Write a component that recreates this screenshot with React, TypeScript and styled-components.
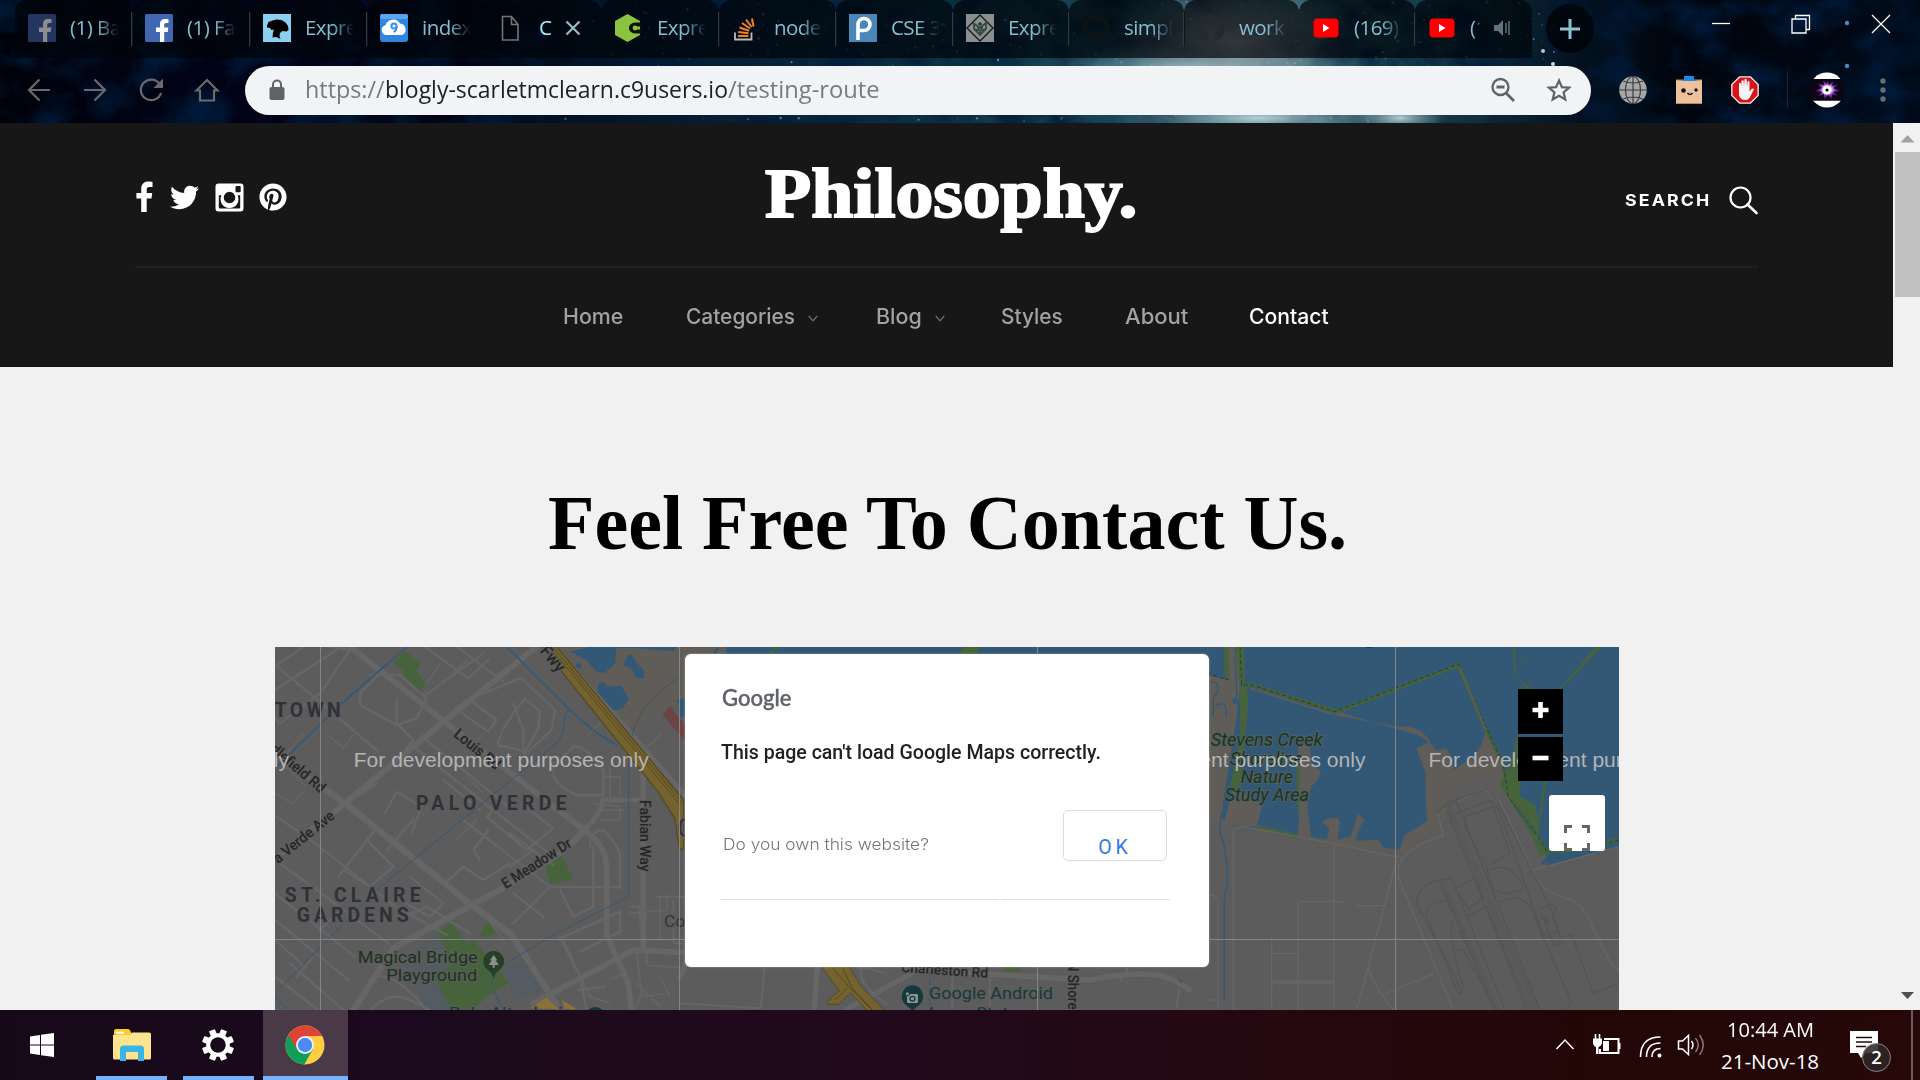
import React, { useLayoutEffect, useRef, useState } from "react";
import styled, { createGlobalStyle, css } from "styled-components";
import { FaTwitter, FaPinterest, FaGithub } from "react-icons/fa";

const GlobalStyle = createGlobalStyle`
  *, *::before, *::after { box-sizing: border-box; }
  html, body { margin: 0; padding: 0; background: #000; overflow: hidden; }
`;

const ui = `"Open Sans", "Noto Sans", sans-serif`;
const serif = `"Liberation Serif", "Times New Roman", serif`;

/* ---------- Text fitted to a known width ---------- */

const FitBox = styled.span<{ $w: number }>`
  display: block;
  flex: none;
  width: ${(p) => p.$w}px;
  white-space: pre;
`;
const FitInner = styled.span`
  display: inline-block;
  transform-origin: 0 50%;
`;

function Fit({ w, children }: { w: number; children: React.ReactNode }) {
  const ref = useRef<HTMLSpanElement>(null);
  const [scale, setScale] = useState(1);
  useLayoutEffect(() => {
    if (ref.current) setScale(w / ref.current.offsetWidth);
  }, [w]);
  return (
    <FitBox $w={w}>
      <FitInner ref={ref} style={{ transform: `scaleX(${scale})` }}>
        {children}
      </FitInner>
    </FitBox>
  );
}

/* ---------- Frame ---------- */

const Screen = styled.div`
  width: 1920px;
  height: 1080px;
  display: flex;
  flex-direction: column;
  overflow: hidden;
  font-family: ${ui};
`;

const Chrome = styled.header`
  position: relative;
  height: 123px;
  flex: none;
  display: flex;
  flex-direction: column;
  background: #01030c;
  overflow: hidden;
`;
const SkyLayer = styled.svg`
  position: absolute;
  inset: 0;
  width: 1920px;
  height: 123px;
`;

function Sky() {
  const stars: React.ReactNode[] = [];
  let seed = 7;
  const rnd = () => (seed = (seed * 16807) % 2147483647) / 2147483647;
  for (let i = 0; i < 420; i++) {
    const x = 560 + rnd() * 1000;
    const y = rnd() * 123;
    stars.push(<circle key={i} cx={x} cy={y} r={0.4 + rnd() * 0.9} fill="#9fc6d6" opacity={0.15 + rnd() * 0.45} />);
  }
  return (
    <SkyLayer viewBox="0 0 1920 123" preserveAspectRatio="none">
      <defs>
        <linearGradient id="sky" x1="0" x2="1">
          <stop offset="0" stopColor="#00020a" />
          <stop offset=".14" stopColor="#01041a" />
          <stop offset=".24" stopColor="#000210" />
          <stop offset=".33" stopColor="#04182e" />
          <stop offset=".45" stopColor="#0a2c40" />
          <stop offset=".58" stopColor="#174456" />
          <stop offset=".66" stopColor="#2f6474" />
          <stop offset=".75" stopColor="#15394a" />
          <stop offset=".82" stopColor="#031220" />
          <stop offset=".88" stopColor="#00040c" />
          <stop offset="1" stopColor="#010a18" />
        </linearGradient>
        <radialGradient id="glow">
          <stop offset="0" stopColor="#cfe6ea" stopOpacity=".85" />
          <stop offset=".5" stopColor="#8fb2ba" stopOpacity=".45" />
          <stop offset="1" stopColor="#6d98a2" stopOpacity="0" />
        </radialGradient>
        <radialGradient id="dust">
          <stop offset="0" stopColor="#c9c4c0" stopOpacity=".8" />
          <stop offset=".6" stopColor="#9a9c9c" stopOpacity=".4" />
          <stop offset="1" stopColor="#7c8c90" stopOpacity="0" />
        </radialGradient>
        <filter id="clouds" x="0" y="0" width="100%" height="100%">
          <feTurbulence type="fractalNoise" baseFrequency=".022 .03" numOctaves="5" seed="4" />
          <feColorMatrix values="0 0 0 0 0  0 0 0 0 0.01  0 0 0 0 0.04  2.4 0 0 0 -0.95" />
        </filter>
      </defs>
      <rect width="1920" height="123" fill="url(#sky)" />
      <rect width="1920" height="123" filter="url(#clouds)" />
      <ellipse cx="1235" cy="42" rx="130" ry="62" fill="url(#dust)" />
      <ellipse cx="1190" cy="75" rx="170" ry="34" fill="url(#glow)" />
      <ellipse cx="1260" cy="118" rx="150" ry="22" fill="url(#glow)" />
      <ellipse cx="1400" cy="118" rx="50" ry="16" fill="url(#glow)" />
      {stars}
      <circle cx="1847" cy="23" r="2.2" fill="#4f8bbd" />
      <circle cx="1847" cy="66" r="2.2" fill="#4f8bbd" />
      <circle cx="1543" cy="51" r="2" fill="#9fd0e0" />
      <circle cx="1553" cy="64" r="2" fill="#b7dfea" />
    </SkyLayer>
  );
}

/* ---------- Tabs ---------- */

const TabStrip = styled.div`
  position: relative;
  height: 58px;
  flex: none;
  display: flex;
  padding-left: 15px;
`;
const Tab = styled.div<{ $w: number; $line?: boolean; $pad?: number }>`
  position: relative;
  width: ${(p) => p.$w}px;
  height: 58px;
  flex: none;
  display: flex;
  align-items: center;
  padding: 0 8px 2px ${(p) => p.$pad ?? 13}px;
  border-radius: 12px 12px 0 0;
  background: rgba(0, 4, 8, 0.7);
  ${(p) =>
    p.$line &&
    css`
      &::after {
        content: "";
        position: absolute;
        right: -1px;
        top: 12px;
        width: 2px;
        height: 34px;
        background: #2b3e45;
      }
    `}
`;
const Favicon = styled.svg`
  width: 28px;
  height: 28px;
  flex: none;
`;
const FaviconSlot = styled.span`
  display: flex;
  width: 28px;
  height: 28px;
  flex: none;
`;
const TabTitle = styled.span<{ $active?: boolean; $gap?: number; $w?: number; $solid?: boolean }>`
  width: ${(p) => p.$w ?? 49}px;
  margin: -2px 0 0 ${(p) => p.$gap ?? 14}px;
  overflow: hidden;
  white-space: nowrap;
  font-size: 20.5px;
  line-height: 28px;
  letter-spacing: -0.55px;
  color: ${(p) => (p.$active ? "#a5e8ff" : "#87bdd0")};
  ${(p) => !p.$solid && css`mask-image: linear-gradient(90deg, #000 55%, transparent 100%);`}
`;
const TabIcon = styled.svg<{ $gap?: number }>`
  flex: none;
  margin-left: ${(p) => p.$gap ?? 8}px;
`;
const NewTab = styled.div`
  width: 48px;
  height: 49px;
  margin: 4px 0 0 14px;
  border-radius: 50%;
  background: rgba(0, 2, 6, 0.8);
  display: flex;
  align-items: center;
  justify-content: center;
`;
const WindowControls = styled.div`
  margin-left: auto;
  padding: 14px 29px 0 0;
  display: flex;
  gap: 60px;
`;

const Fb = ({ dim }: { dim?: boolean }) => (
  <Favicon viewBox="0 0 28 28">
    <rect width="28" height="28" rx="1.5" fill={dim ? "#243560" : "#4267b2"} />
    <path d="M15 28V18h-4v-4.500h4v-3.300C15 6.500 17 5 20.300 5c1.600 0 2.700.100 3.200.200v3.900h-2.200c-1.700 0-2.100.900-2.100 2.100v2.300h4.100l-.600 4.500h-3.500V28z" fill={dim ? "#8d8d8d" : "#fff"} />
  </Favicon>
);
const Heroku = () => (
  <Favicon viewBox="0 0 28 28">
    <rect width="28" height="28" fill="#8bd0f0" />
    <path d="M4 11.500L5.500 8l4-1.500 4-1 5 .5 4 2.500L25 12l.5 4-2 1.500-4-.5-2.500 2-.5 3 1 3-3-1.500-2-.5-3 .5.5-5 1-3-2.500.5-1.500-2-3-.5z" fill="#000" />
  </Favicon>
);
const Cloud9 = () => (
  <Favicon viewBox="0 0 28 28">
    <rect width="28" height="28" rx="3" fill="#2f85e0" />
    <rect width="28" height="5" rx="2" fill="#5aa6f0" />
    <path d="M6 21a5 5 0 0 1-.5-9.800A8 8 0 0 1 20 9.500a6 6 0 0 1 2 11.500z" fill="#fff" />
    <circle cx="14" cy="12" r="2.600" fill="none" stroke="#3b8fe6" strokeWidth="2" />
    <path d="M16.700 12c0 3-1 5-3 6" stroke="#3b8fe6" strokeWidth="2" fill="none" />
  </Favicon>
);
const Doc = () => (
  <Favicon viewBox="0 0 28 28">
    <path d="M1.500 2.500h9l6.500 8v15.500h-15.500zM10.500 2.500v8H17" fill="none" stroke="#747474" strokeWidth="1.600" />
  </Favicon>
);
const Hex = () => (
  <Favicon viewBox="0 0 28 28">
    <path d="M12.500 0L25 7v14l-12.500 7L0 21V7z" fill="#8ac43f" />
    <path d="M26 8.500h-4c-5 0-8 2-8 5.500s3 5.500 8 5.500h4v-4h-4c-2 0-3-.4-3-1.500s1-1.500 3-1.500h4z" fill="#0a1208" />
    <circle cx="20" cy="14" r="2.400" fill="#8ac43f" />
  </Favicon>
);
const StackO = () => (
  <Favicon viewBox="0 0 28 28">
    <path d="M3 18.500v7h16.500v-7" fill="none" stroke="#bcbbbb" strokeWidth="1.800" />
    <path d="M6 22h10.500M6.200 18l10.300 1.200M7.500 13.500l9.500 3.200M10 9l8 5.500M14 5.500l5.500 7.500M20 4.500l1.500 8" stroke="#f48024" strokeWidth="2" />
  </Favicon>
);
const Piazza = () => (
  <Favicon viewBox="0 0 28 28">
    <rect width="28" height="28" fill="#4a86b8" />
    <path d="M9 26V10.500a6 6 0 1 1 6 6H9" fill="none" stroke="#fff" strokeWidth="3.600" />
  </Favicon>
);
const Diamond = () => (
  <Favicon viewBox="0 0 28 28">
    <rect width="28" height="28" fill="#8b8e8e" />
    <path d="M14 1L27 14 14 27 1 14z" fill="#8b9390" stroke="#151a1a" strokeWidth="1.400" />
    <path d="M7 9l7 5 7-6M8 15l6 6 6-6M8 9v6l6 2 6-2V9M11 11l3 8 3-8" fill="none" stroke="#31493c" strokeWidth="1.700" />
    <circle cx="14" cy="10" r="1.800" fill="#26382f" />
  </Favicon>
);
const YouTube = () => (
  <Favicon viewBox="0 0 28 28">
    <rect x="1.500" y="4.500" width="25" height="19" rx="4" fill="#fe0000" />
    <path d="M11 10v8l6.500-4z" fill="#fff" />
  </Favicon>
);
const GitHubMark = ({ color }: { color: string }) => (
  <FaviconSlot>
    <FaGithub size={28} color={color} />
  </FaviconSlot>
);

/* ---------- Toolbar ---------- */

const Toolbar = styled.div`
  position: relative;
  height: 65px;
  display: flex;
  align-items: center;
  padding: 0 0 1px 25px;
`;
const NavIcons = styled.div`
  display: flex;
  gap: 28px;
  width: 220px;
`;
const Omnibox = styled.div`
  width: 1346px;
  height: 49px;
  border-radius: 25px;
  background: #f1f3f4;
  display: flex;
  align-items: center;
  padding: 0 18px 0 20px;
`;
const Url = styled.div`
  display: flex;
  margin-left: 16px;
  flex: 1;
  font-size: 24.5px;
  line-height: 46px;
  height: 49px;
  color: #202124;
`;
const UrlPart = styled.span<{ $muted?: boolean }>`
  color: ${(p) => (p.$muted ? "#777b80" : "#202124")};
`;
const BoxIcons = styled.div`
  display: flex;
  gap: 28px;
`;
const Extensions = styled.div`
  display: flex;
  align-items: center;
  gap: 28px;
  margin-left: 28px;
`;
const Rule = styled.div`
  width: 1px;
  height: 36px;
  background: #20262d;
`;
const AvatarWrap = styled.div`
  margin-left: -7px;
  height: 36px;
`;
const MenuDots = styled.svg`
  margin-left: 6px;
`;

/* ---------- Web page ---------- */

const Viewport = styled.div`
  display: flex;
  height: 887px;
  flex: none;
`;
const Page = styled.main`
  width: 1893px;
  background: #f1f1f1;
  overflow: hidden;
`;
const SiteHeader = styled.div`
  height: 244px;
  background: #171717;
  padding: 0 135px;
`;
const HeaderTop = styled.div`
  height: 145px;
  display: grid;
  grid-template-columns: 1fr auto 1fr;
  border-bottom: 2px solid #202020;
`;
const Social = styled.div`
  display: flex;
  align-items: flex-start;
  padding: 58px 0 0 1px;
  color: #fff;
`;
const SocialItem = styled.span<{ $w: number; $gap: number; $top?: number }>`
  display: flex;
  width: ${(p) => p.$w}px;
  margin-right: ${(p) => p.$gap}px;
  padding-top: ${(p) => p.$top ?? 0}px;
`;
const Logo = styled.div`
  padding: 31px 0 0 8px;
  font: bold 69px/80px ${serif};
  color: #fff;
  -webkit-text-stroke: 2px #fff;
`;
const Search = styled.div`
  display: flex;
  justify-content: flex-end;
  padding-top: 62px;
  font: 700 16.5px/30px Inter, sans-serif;
  letter-spacing: 2px;
  color: #fff;
`;
const SearchIcon = styled.svg`
  margin: 0 0 0 17px;
`;
const Nav = styled.nav`
  display: flex;
  padding: 33px 0 0 428px;
`;
const NavItem = styled.a<{ $active?: boolean; $gap?: number }>`
  display: flex;
  align-items: center;
  margin-right: ${(p) => p.$gap ?? 63}px;
  font: 500 21px/32px Inter, sans-serif;
  color: ${(p) => (p.$active ? "#fff" : "#a2a2a2")};
`;
const Caret = styled.svg`
  margin: 3px 0 0 13px;
`;
const Title = styled.h1`
  margin: 0;
  padding: 116px 0 0 548px;
  height: 280px;
  font: bold 79px/80px ${serif};
  color: #000;
`;
const MapFrame = styled.section`
  position: relative;
  width: 1344px;
  height: 363px;
  margin-left: 275px;
  overflow: hidden;
  background: #5c5c5c;
`;
const MapArt = styled.svg`
  display: block;
`;
const ZoomControls = styled.div`
  position: absolute;
  left: 1243px;
  top: 42px;
  display: flex;
  flex-direction: column;
  gap: 3px;
`;
const ZoomButton = styled.button<{ $h: number }>`
  width: 45px;
  height: ${(p) => p.$h}px;
  padding: 0 0 3px;
  border: 0;
  background: #000;
  display: flex;
  align-items: center;
  justify-content: center;
`;
const Fullscreen = styled.button`
  position: absolute;
  left: 1274px;
  top: 148px;
  width: 56px;
  height: 56px;
  padding: 29px 15px 0;
  border: 0;
  border-radius: 3px;
  background: #fff;
`;
const Dialog = styled.div`
  position: absolute;
  left: 410px;
  top: 7px;
  width: 524px;
  height: 313px;
  padding: 28px 38px 0 36px;
  border-radius: 6px;
  background: #fff;
  box-shadow: 0 0 2px rgba(255, 255, 255, 0.5);
`;
const Brand = styled.div`
  font: 500 23px/30px Lato, sans-serif;
  color: #5f6368;
  padding-left: 1px;
  -webkit-text-stroke: 0.4px #5f6368;
`;
const Message = styled.div`
  margin-top: 26px;
  font: 500 19.500px/30px Roboto, sans-serif;
  color: #202124;
`;
const Actions = styled.div`
  display: flex;
  justify-content: space-between;
  margin: 42px 4px 38px 2px;
`;
const Question = styled.div`
  padding-top: 20px;
  font: 300 16.500px/28px Inter, sans-serif;
  color: #757575;
`;
const OkButton = styled.button`
  width: 104px;
  height: 51px;
  padding: 24px 0 0 0;
  border: 1px solid #dadce0;
  border-radius: 5px;
  background: #fff;
  font: 400 19.500px/26px Roboto, sans-serif;
  letter-spacing: 4px;
  color: #3577e8;
`;
const Lines = styled.div`
  display: grid;
  grid-template-columns: 278px 169px;
  gap: 2px;
`;
const Line = styled.div`
  height: 1px;
  background: #dedede;
`;

/* ---------- Scrollbar ---------- */

const Scrollbar = styled.div`
  width: 27px;
  background: #f1f1f1;
  display: flex;
  flex-direction: column;
  padding-left: 2px;
`;
const ScrollArrow = styled.svg`
  display: block;
  flex: none;
`;
const ScrollThumb = styled.div`
  height: 145px;
  background: #c1c1c1;
  margin-bottom: auto;
`;

/* ---------- Taskbar ---------- */

const Taskbar = styled.footer`
  height: 70px;
  flex: none;
  display: flex;
  background: linear-gradient(90deg, #17081a 0, #1b0a1d 22%, #200a1c 45%, #25080f 68%, #230707 82%, #250807 100%);
`;
const StartButton = styled.div`
  width: 84px;
  padding: 23px 0 0 30px;
`;
const TaskItem = styled.div<{ $w: number; $gap: number; $nudge?: number; $active?: boolean }>`
  width: ${(p) => p.$w}px;
  margin-left: ${(p) => p.$gap}px;
  display: flex;
  justify-content: center;
  align-items: center;
  padding: 3px ${(p) => p.$nudge ?? 0}px 0 0;
  border-bottom: 4px solid #76b2fb;
  background: ${(p) => (p.$active ? "#4a3946" : "transparent")};
`;
const Tray = styled.div`
  margin-left: auto;
  display: flex;
`;
const TrayIcons = styled.svg`
  display: block;
`;
const Clock = styled.div`
  width: 98px;
  margin-left: 10px;
  padding-top: 3px;
  font: 400 20.5px/32px ${ui};
  color: #fff;
  display: flex;
  flex-direction: column;
  align-items: center;
`;
const Notice = styled.div`
  position: relative;
  width: 61px;
  margin-left: 31px;
  padding-top: 20px;
`;
const Badge = styled.span`
  position: absolute;
  left: 12px;
  top: 33px;
  width: 29px;
  height: 29px;
  border-radius: 50%;
  border: 1.5px solid #8b8383;
  background: rgba(44, 38, 38, 0.88);
  font: 600 18.500px/25px ${ui};
  color: #fff;
  text-align: center;
`;
const Peek = styled.div`
  width: 9px;
  border-left: 2px solid #6b5a5a;
`;

/* ---------- Map drawing ---------- */

const road = "#666666";
const water = "#325876";
const park = "#47633c";
const sand = "#605d58";

function WestMap() {
  return (
    <g transform="translate(-5 -7) scale(.33333)" fill="none">
      <path d="M855 20h410v170l-80 10-100 90z" fill={sand} />
      <path d="M495 880l-90 90 60 140h130l-60-180zM700 985l80-30 50 95-100 30z" fill="#545c61" />
      <g fill={park}>
        <path d="M405 32l48 38-14 20 28 40-16 27-57-42 8-18-34-30z" />
        <path d="M825 680l48-34 35 65-8 10-58 10z" />
        <path d="M502 875l43-25 45 60 18-14 108 132-78 52-30 35h-60l-60-110 60-30z" />
        <path d="M630 885q15-35 28-35 12 10 24 27-30 25-52 8z" />
      </g>
      <path d="M1178 225l22-28 50 65v48z" fill="#6d4444" />
      <g fill={water}>
        <path d="M900 35l60-15h80l-5 50-30 28-25-2-30-35zM1020 20h200l-10 14-50-4-60-5zM1060 75l14-30 12 0 20 30 18 20-5 22-22-5-15-27zM985 130l14-4 16 14 40-2 22 38-20 30-35 8-25-22-14-22zM918 72l10-6 8 12-8 8-10-6zM1218 180l32-6v30l-22-8z" />
      </g>
      <g stroke={road} strokeLinejoin="round" strokeLinecap="round">
        <g strokeWidth="19">
          <path d="M240 20L530 250 950 575q60 45 60 110v200l65 145 10 80" strokeWidth="17" />
          <path d="M800 20L520 245 225 490 10 660" strokeWidth="18" />
          <path d="M10 340L225 490 605 795 725 885 870 1110" />
          <path d="M940 570Q900 640 605 795L370 925 250 1110" />
          <path d="M790 1090L1090 930l160 8M1120 380v550" strokeWidth="17" />
          <path d="M995 480h130M1000 480q-10 50-60 90" strokeWidth="14" />
          <path d="M850 20l400 450" strokeWidth="15" />
        </g>
        <g strokeWidth="7">
          <path d="M15 150l200-130M15 75l110 90 200 170M180 20l60 10-90 130-120 90-15-15" />
          <path d="M20 530l110 75 240 190 160 90M15 660l180 130 160 120M15 760l240 190M15 840l160 130 60 50M15 900l90 80" />
          <path d="M100 20l-85 60M330 100l-60 60 0 35 110 60 60-20 30-60-80-70-90 0M380 180l0 70 50 50-25 30M465 20l130 95 60-55M560 20l140 105" />
          <path d="M600 180l80 60-25 35-100-70M640 40l-180 130M690 320q-20-10 40-100l35-45 45 40-5 50-40 70-80-20M755 115l100 95-10 60-80 75M640 160l110-45" />
          <path d="M850 380l60-60q30-10 90 70v80M850 390q-5 40 70 75h80M760 340l0-70-30-80" />
          <path d="M315 570l-110 140M290 600l80 80-70 60-80-50M320 430l-60 40M430 540l-80 90M345 520l35-65 75 45-30 80" />
          <path d="M430 320l290 230 130 100M455 290l260 210M520 420l110 90M580 540l260 200 210 2M680 500l-30 30 120 100 80-65-90-70M655 570l-45 60 20 30M720 670l-80 50-60-40-50 45M720 580l130 95M790 630l-70 50" />
          <path d="M840 740l-110 110M870 750l40 80 60-30V620M960 620q0-50 40-50 50 50 50 80v95M870 895l180-80v60l-120 60M730 760l90 70M870 890l60 120 20 100M925 1050l80-10" />
          <path d="M60 970l160 140M15 1010l130 100M300 1110q60-60 120-30l60 30M320 1010q60-10 150 100M420 710l100 80-40 40-90-50M80 1010l50-60M150 870l60-60M410 830l60-30 130 80" />
          <path d="M880 900l80 170 60 20M1100 940l15 120-20 50M1130 940v35l120 10M1080 820l110-10v-45M1080 800h30v50M1160 770h90M1170 900v-130M970 490l80 10v40h-60M1000 410h50v50M1020 380v110M1000 510h60M1210 780v130h30" strokeWidth="5" />
          <path d="M180 290l40 35 30-40M15 460l50 30 40-40M110 440l-60-60M100 280l-50 60M540 110l50-50M510 70l-40 60M600 330l40-50M640 460l-50-50M560 600l60-60M700 900l-60-80M1060 1000l-40 20M1100 1030l70 70M1170 1010l30 60M1120 1070l80-10M1010 230l-60 60M1175 280l-60 60" strokeWidth="4" />
        </g>
      </g>
      <g stroke={water}>
        <path d="M412 20L215 190 20 380" strokeWidth="5" />
        <path d="M710 20Q830 140 900 210q70 70 140 105" strokeWidth="5" />
        <path d="M905 212q-20-5-22 25 0 50-25 75L730 415Q600 520 320 750L30 1045M1076 370v400L840 890 700 975M670 990q-20 30 25 110M1245 103q-110 60-150 150l-8 35" strokeWidth="3" />
        <path d="M15 1070l40 40" strokeWidth="3" />
      </g>
      <path d="M815 20h45L1240 480v150l-12-5-14-90-50-80z" fill="#74632e" stroke="#574922" strokeWidth="4" />
      <path d="M840 22l392 475M850 22l385 465" stroke="#51451f" strokeWidth="2.500" />
      <path d="M780 1105l50-32 40 37zM875 1080l50 30h-40z" fill="#8a7334" />
      <g fontFamily="Roboto, sans-serif" fill="#2e3238" stroke="#5c5c5c" strokeWidth="7" paintOrder="stroke">
        <g fontWeight="700" fontSize="58">
          <text x="14" y="231" textLength="198">TOWN</text>
          <text x="438" y="509" textLength="452">PALO VERDE</text>
          <text x="44" y="786" textLength="408">ST. CLAIRE</text>
          <text x="80" y="846" textLength="336">GARDENS</text>
        </g>
        <g fontSize="45" fill="#262626" fontWeight="500">
          <text transform="translate(548 287) rotate(39)" textLength="165" lengthAdjust="spacingAndGlyphs">Louis Rd</text>
          <text transform="translate(-2 332) rotate(40)" textLength="200" lengthAdjust="spacingAndGlyphs">dlefield Rd</text>
          <text transform="translate(24 672) rotate(-39)" textLength="222" lengthAdjust="spacingAndGlyphs">a Verde Ave</text>
          <text transform="translate(707 748) rotate(-33)" textLength="240" lengthAdjust="spacingAndGlyphs">E Meadow Dr</text>
          <text transform="translate(1109 480) rotate(90)" textLength="215" lengthAdjust="spacingAndGlyphs">Fabian Way</text>
          <text transform="translate(808 34) rotate(50)" textLength="86" lengthAdjust="spacingAndGlyphs" fontSize="50">Fwy</text>
        </g>
        <g fontSize="52" fill="#1b331d">
          <text x="263" y="969" textLength="360" lengthAdjust="spacingAndGlyphs">Magical Bridge</text>
          <text x="349" y="1024" textLength="273" lengthAdjust="spacingAndGlyphs">Playground</text>
          <text x="538" y="1136" textLength="390" fill="#17383b">Palo Alto Junior</text>
          <text x="1182" y="860" fill="#30343a">Co</text>
        </g>
        <text x="1222" y="590" fontSize="80" fill="#333">C</text>
      </g>
      <path d="M671 1018q-3-22-20-30a31 31 0 1 1 40 0q-17 8-20 30z" fill="#24402a" />
      <path d="M671 945l-11 16h5l-9 14h12v8h6v-8h12l-9-14h5z" fill="#8a8f8a" />
      <circle cx="976" cy="1131" r="30" fill="#17383b" />
    </g>
  );
}

function SouthMap() {
  return (
    <g transform="translate(405 -7) scale(.34439 .33333)" fill="none">
      <path d="M0 20h130v100H0z" fill={sand} />
      <path d="M135 20h1433v24H135z" fill={water} />
      <path d="M95 40l12-20h6l-8 22zM0 180h14v50H0z" fill={water} />
      <path d="M820 20h54l-14 24h-45zM260 44l35-24h-14l-30 24zM940 975h46v20h-46z" fill={park} />
      <g stroke={road} strokeLinecap="round">
        <path d="M0 1010L20 960M400 960l-10 150M480 1110L690 990l500 30q190-40 260 10l30 20" strokeWidth="16" />
        <path d="M245 985l-10 120M0 1090l230 15M525 985q-10 50 80 110M790 990v120M900 1010v100M1450 1050l-10 60M1540 1110v-30h28M1300 985l-20 35" strokeWidth="6" />
        <path d="M600 1000l-80-20" strokeWidth="5" />
      </g>
      <path d="M725 985v125" stroke={water} strokeWidth="3" strokeDasharray="20 10" />
      <path d="M1447 1015l14 12-8 2-6-8z" fill={water} />
      <path d="M410 978h80l35 60 70 75h-50l-50-55q-10 10-35 35h-32q5-20 35-40-30-40-53-75z" fill="#74632e" stroke="#4b4020" strokeWidth="2" />
      <path d="M440 980l50 60 70 72M470 980l30 65 60 66M450 1080l35-35" stroke="#4f4420" strokeWidth="2.500" />
      <g fontFamily="Roboto, sans-serif" stroke="#5c5c5c" strokeWidth="6" paintOrder="stroke">
        <text transform="translate(642 996) rotate(4)" fontSize="42" fontWeight="500" textLength="252" lengthAdjust="spacingAndGlyphs" fill="#262626">Charleston Rd</text>
        <text x="723" y="1078" fontSize="52" textLength="360" lengthAdjust="spacingAndGlyphs" fill="#17383b">Google Android</text>
        <text x="723" y="1136" fontSize="52" textLength="314" lengthAdjust="spacingAndGlyphs" fill="#17383b">Lawn Statues</text>
        <text transform="translate(1128 966) rotate(90)" fontSize="40" fontWeight="500" fill="#262626">N Shoreline</text>
      </g>
      <path d="M675 1112l-18-16a31 33 0 1 1 36 0z" fill="#17383b" />
      <rect x="659" y="1062" width="32" height="27" rx="4" fill="#8a9494" />
      <circle cx="675" cy="1076" r="7" fill="#8a9494" stroke="#17383b" strokeWidth="4" />
      <circle cx="660" cy="1061" r="6" fill="#8a9494" stroke="#17383b" strokeWidth="3" />
    </g>
  );
}

function EastMap() {
  return (
    <g transform="translate(925 -7) scale(.33333)" fill="none">
      <path d="M0 20h1257v600L1000 690l-600-90L100 560 0 480z" fill={water} />
      <path d="M0 100l85 20V20h25l10 130-10 80-40 250-5 70-65 10z" fill={sand} />
      <path d="M-5 20h76l18 100-94-22z" fill={water} />
      <path d="M70 555l30-110 88 45-16 70zM292 590l5-40-3-230q0-10 35-10l6 60 28 25q-10 30-30 45-10 40-10 70l12 90z" fill={sand} />
      <path d="M380 600l8-35-20-15 4-10 20-5 20-2 8 12-8 55 40-10 18-55 6-13 12 12 6 10-10 8-20 50 70-2q20 20 20 50l40-5 20-60 65-40q5-10-1-40l-2-110-20-50-5-22 40-18q-30-50-95-45L400 225l20-8 205 60q50 10 85 55l30-8 10 25 13 40 50-35q30-20 45-85l45 100 20 80 90 160 35 60-1048 40z" fill={sand} />
      <path d="M-40 548l85 0 60 10 450 76 45 14 70-60 60-30 15-50-10-50 140-60 55 35 60 150 60 110 267-70v500H-100z" fill="#5c5c5c" />
      <g fill={park}>
        <path d="M71 20h15l2 100-14-8zM107 20h24l4 115-15-2zM120 140l22 0q5 90-8 150l-14 160h-30l10-70 20-100zM170 558l5-4 120 28-5 12-120-27zM290 380h8v140l-8-10zM940 20h6v85l70 90 30-10 160-165h-18L1080 145l-30 35-32-15-76-60z" />
        <path d="M920 400q20-60 30-110l20 0-10 180 20 10 25 15 8 40 0 20 20-140h8l-30 190 20 20 20 15-30 10-24-60-100-160z" />
      </g>
      <path d="M125 135h30L410 215 775 75 860 275 910 375l15 90 90 130 25 38h90l125-35" stroke={park} strokeWidth="11" />
      <path d="M120 20l5 115h30L405 215 775 72 860 265 910 375l15 95 90 120 25 42h90l125-32M20 100l65 20" stroke="#253f2b" strokeWidth="3" strokeDasharray="13 7" />
      <path d="M780 85l78 185M150 145l250 78" stroke={sand} strokeWidth="5" />
      <path d="M1018 675q20-30 60-36l90-5 50-14-20 22-120 14z" fill={water} />
      <path d="M105 20l6 160q20 90-20 240-5 60-25 100-15 50 5 90l10 60v70q-8 20-8 50v270M30 125q30 0 24 30-20 20-14 40v37M45 195l30-4 5 42M73 900v180" stroke={water} strokeWidth="4" />
      <path d="M97 176l12-4 3 16-14 4zM172 555l17-70 105 10-3 88z" fill={water} />
      <path d="M945 500l55 75" stroke={water} strokeWidth="4" />
      <path d="M945 75l35-22M990 120v15" stroke={park} strokeWidth="3" />
      <g stroke="#666" strokeWidth="4">
        <path d="M100 1110V580q5-20 30-20l270 50 210 45q-30 30-5 80l155 375M610 655q20-35 120-70l-15-60q10-20 130-75 40 0 65 55l100 210q20 40 90 60 50 15 75 80l60 120 30 20M1000 690l257-70M402 610v500M294 1110V800q0-16 15-16h105l16 4M468 797h85M590 660L470 1110M505 980q10 50 75 130M545 1065l160-65M215 895v215M215 940h80M215 1023h185M215 1029h185M30 765q24 0 24 20v325M30 1080h24" />
      </g>
      <g stroke="#545454" strokeWidth="3.500">
        <path d="M718 520q0-15 30-35l115-38q15 5 35 50l165 330 10 40-30 25-15-10-130-370q-10-25-30-30l-100 38q-25 20-15 30M740 500l30-15 250 625M740 510l240 600" />
        <path d="M795 530l85-30 50 140-70 40-65-120zM860 690q80-30 110 55-60 30-90 0zM895 790q70-40 100 20l120 280-20 20M765 745l60-30 25 60-45 30zM800 830l60-30 130 310M650 790q0-50 65-70l40-5 160 395M720 720l165 390M650 790l15 30 120 230q5 10-10 10L680 830q-10-35 60-50l50 100M770 940q0-15 20-10l100 180" />
        <path d="M1015 810l40-17 16 15-15 20 32 80-25 10-40-100M1035 825l12 25-8 5zM1070 910l20-20 25-5 65 175 77-30M765 880q15-15 25 20M760 840q-20 40 30 200" />
      </g>
      <path d="M745 500L1010 1110M725 725l165 385" stroke="#555" strokeWidth="18" opacity=".5" />
      <path d="M500 19h14v4h-14z" fill="#1b2b35" />
      <g fontFamily="Roboto, sans-serif" fontStyle="italic" fontSize="54" fill="#1b331d" stroke="#4f5f5f" strokeWidth="6" paintOrder="stroke">
        <text x="32" y="319" textLength="336" lengthAdjust="spacingAndGlyphs">Stevens Creek</text>
        <text x="90" y="374" textLength="218" lengthAdjust="spacingAndGlyphs">Shoreline</text>
        <text x="122" y="429" textLength="157" lengthAdjust="spacingAndGlyphs">Nature</text>
        <text x="74" y="484" textLength="253" lengthAdjust="spacingAndGlyphs">Study Area</text>
      </g>
    </g>
  );
}

function CityMap() {
  return (
    <MapArt width="1344" height="363" viewBox="0 0 1344 363">
      <rect width="1344" height="363" fill="#5c5c5c" />
      <WestMap />
      <SouthMap />
      <svg x="930" y="0" width="414" height="363" viewBox="930 0 414 363">
        <EastMap />
      </svg>
      <path d="M45.500 0v363M404.500 0v363M762.500 0v363M1120.500 0v363M0 292.500h1344" stroke="#858585" fill="none" />
      <g fontFamily="'Liberation Sans', Arial, sans-serif" fontSize="20.800" fill="#b4b4b4">
        {[-281, 78.700, 437.500, 795.500, 1153.500].map((x) => (
          <text key={x} x={x} y="120.300" textLength="295" lengthAdjust="spacingAndGlyphs">
            For development purposes only
          </text>
        ))}
      </g>
    </MapArt>
  );
}

const CaretIcon = () => (
  <Caret width="10" height="7" viewBox="0 0 10 7">
    <path d="M.7 .8L5 5.800 9.300 .8" fill="none" stroke="#727272" strokeWidth="1.300" />
  </Caret>
);

function gear() {
  const teeth: React.ReactNode[] = [];
  for (let i = 0; i < 8; i++) {
    teeth.push(<rect key={i} x="12.800" y="0" width="6.400" height="8" rx="1" transform={`rotate(${i * 45 + 22.5} 16 16)`} fill="#fff" />);
  }
  return teeth;
}

export default function App() {
  return (
    <Screen>
      <GlobalStyle />
      <Chrome>
        <Sky />
        <TabStrip>
          <Tab $w={117} $line><Fb dim /><TabTitle>(1) Ba</TabTitle></Tab>
          <Tab $w={118} $line><Fb /><TabTitle>(1) Fac</TabTitle></Tab>
          <Tab $w={117} $line><Heroku /><TabTitle>Expre</TabTitle></Tab>
          <Tab $w={117}><Cloud9 /><TabTitle>index.</TabTitle></Tab>
          <Tab $w={117} $pad={17}>
            <Doc />
            <TabTitle $active $gap={10} $w={18} $solid>C</TabTitle>
            <TabIcon width="16" height="16" viewBox="0 0 16 16"><path d="M1.500 1.500l13 13M14.500 1.500l-13 13" stroke="#9fb9c4" strokeWidth="2.200" /></TabIcon>
          </Tab>
          <Tab $w={118} $line $pad={14}><Hex /><TabTitle>Expre</TabTitle></Tab>
          <Tab $w={117} $line><StackO /><TabTitle>node.</TabTitle></Tab>
          <Tab $w={117} $line><Piazza /><TabTitle>CSE 3</TabTitle></Tab>
          <Tab $w={116} $line><Diamond /><TabTitle>Expre</TabTitle></Tab>
          <Tab $w={115} $line><GitHubMark color="#0d1416" /><TabTitle>simpl</TabTitle></Tab>
          <Tab $w={115}><GitHubMark color="#24292a" /><TabTitle>work</TabTitle></Tab>
          <Tab $w={116} $line><YouTube /><TabTitle>(169)</TabTitle></Tab>
          <Tab $w={117}>
            <YouTube />
            <TabTitle $w={11}>(1</TabTitle>
            <TabIcon $gap={12} width="20" height="20" viewBox="0 0 20 20">
              <path d="M1 7h4l5-5v16l-5-5H1z" fill="#5f7379" />
              <path d="M13 5v10M16 3v14" stroke="#5f7379" strokeWidth="1.500" />
            </TabIcon>
          </Tab>
          <NewTab>
            <svg width="22" height="22" viewBox="0 0 22 22"><path d="M11 1v20M1 11h20" stroke="#8fc3d2" strokeWidth="3" /></svg>
          </NewTab>
          <WindowControls>
            <svg width="20" height="20" viewBox="0 0 20 20"><path d="M1 9.500h18" stroke="#fff" strokeWidth="1.300" /></svg>
            <svg width="20" height="20" viewBox="0 0 20 20"><path d="M1 5h14v14H1zM4.500 5V1.500H18.500v14H15" fill="none" stroke="#fff" strokeWidth="1.300" /></svg>
            <svg width="20" height="20" viewBox="0 0 20 20"><path d="M1 1l18 18M19 1L1 19" stroke="#fff" strokeWidth="1.300" /></svg>
          </WindowControls>
        </TabStrip>
        <Toolbar>
          <NavIcons>
            <svg width="28" height="28" viewBox="0 0 28 28"><path d="M25 14H5M14.500 3.500L4 14l10.500 10.500" fill="none" stroke="#6a6a6c" strokeWidth="2.200" /></svg>
            <svg width="28" height="28" viewBox="0 0 28 28"><path d="M3 14h20M13.500 3.500L24 14 13.500 24.500" fill="none" stroke="#6a6a6c" strokeWidth="2.200" /></svg>
            <svg width="28" height="28" viewBox="0 0 28 28">
              <path d="M23 8.500A10.300 10.300 0 1 0 24 17" fill="none" stroke="#6a6a6c" strokeWidth="2.200" />
              <path d="M26 2.500v9.500h-9.500z" fill="#6a6a6c" />
            </svg>
            <svg width="28" height="28" viewBox="0 0 28 28"><path d="M3.500 14.500L14 4l10.500 10.500H21V24.500H7V14.500z" fill="none" stroke="#6a6a6c" strokeWidth="2.200" /></svg>
          </NavIcons>
          <Omnibox>
            <svg width="24" height="24" viewBox="0 0 24 24">
              <rect x="4.500" y="9" width="15" height="13" rx="2" fill="#5f6368" />
              <path d="M8 10V6.500a4 4 0 0 1 8 0V10" fill="none" stroke="#5f6368" strokeWidth="2" />
            </svg>
            <Url>
              <UrlPart $muted><Fit w={80}>https://</Fit></UrlPart>
              <UrlPart><Fit w={343}>blogly-scarletmclearn.c9users.io</Fit></UrlPart>
              <UrlPart $muted><Fit w={152}>/testing-route</Fit></UrlPart>
            </Url>
            <BoxIcons>
              <svg width="28" height="28" viewBox="0 0 28 28">
                <circle cx="11.500" cy="11" r="8" fill="none" stroke="#5f6368" strokeWidth="2.300" />
                <path d="M7.500 11h8M17 17l8 8" stroke="#5f6368" strokeWidth="2.800" />
              </svg>
              <svg width="28" height="28" viewBox="0 0 28 28"><path d="M14 4.500l2.900 6.600 7.200.6-5.500 4.700 1.700 7L14 19.700l-6.300 3.700 1.700-7-5.500-4.700 7.200-.6z" fill="none" stroke="#5f6368" strokeWidth="2.200" /></svg>
            </BoxIcons>
          </Omnibox>
          <Extensions>
            <svg width="28" height="28" viewBox="0 0 28 28">
              <circle cx="14" cy="14" r="13.800" fill="#a7a7a7" />
              <g fill="none" stroke="#3c3f42" strokeWidth="1.200">
                <ellipse cx="14" cy="14" rx="7.500" ry="13.500" />
                <path d="M14 0v28M0 14h28M4 5q10 4 20 0M4 23q10-4 20 0" />
              </g>
            </svg>
            <svg width="28" height="28" viewBox="0 0 28 28">
              <path d="M1 4h26v24H1z" fill="#ecc19c" /><path d="M1 4h26M1 27.500h26" stroke="#b98a5c" />
              <path d="M4 5l5-1V0h10v4l5 1z" fill="#1e88e5" />
              <circle cx="8.500" cy="14.500" r="2.300" fill="#111" /><circle cx="21" cy="14" r="1.700" fill="#111" />
              <path d="M12.500 17q2.500 3 5 0" stroke="#111" strokeWidth="1.600" fill="none" />
            </svg>
            <svg width="28" height="28" viewBox="0 0 28 28">
              <path d="M8.300.2h11.400l8.100 8.100v11.400l-8.100 8.100H8.300L.2 19.700V8.300z" fill="#f3f3f3" />
              <path d="M8.800 1.500h10.400l7.300 7.300v10.400l-7.300 7.300H8.800l-7.300-7.300V8.800z" fill="#d8141b" />
              <path d="M8 13V7.500q1-1.300 2 0V12l.5-7q1.200-1.400 2.200 0l.3 6 .5-7.500q1.200-1.400 2.200 0L16 11l.5-5.500q1.200-1.200 2 0v10l2-2.500q1.500-1 2.500.3L19.500 20q-1.500 4-5 4-5.500 0-6.500-5z" fill="#f4f4f4" />
            </svg>
            <Rule />
            <AvatarWrap>
              <svg width="36" height="36" viewBox="0 0 36 36">
                <defs>
                  <clipPath id="av"><circle cx="18" cy="18" r="17.500" /></clipPath>
                  <radialGradient id="burst"><stop offset="0" stopColor="#fff" /><stop offset=".3" stopColor="#e7b8f5" /><stop offset=".6" stopColor="#7a2bb0" /><stop offset="1" stopColor="#12051f" /></radialGradient>
                </defs>
                <g clipPath="url(#av)">
                  <path d="M4 0h28v7H4zM4 28.500h28V36H4z" fill="#fff" /><rect y="7" width="36" height="21.500" fill="#0b0514" />
                  <path d="M18 7l2 6 5-5-2 6 8-2-7 4 8 3-8 1 6 5-7-3 0 6-4-5-4 5 0-6-7 3 5-5-8-1 8-3-6-5 8 2-1-6 4 5z" fill="url(#burst)" />
                  <circle cx="18" cy="18" r="4.500" fill="#fff" /><circle cx="18" cy="18" r="1.600" fill="#000" />
                </g>
              </svg>
            </AvatarWrap>
            <MenuDots width="8" height="26" viewBox="0 0 8 26"><g fill="#6c6c6e"><circle cx="4" cy="4" r="2.700" /><circle cx="4" cy="13" r="2.700" /><circle cx="4" cy="22" r="2.700" /></g></MenuDots>
          </Extensions>
        </Toolbar>
      </Chrome>

      <Viewport>
        <Page>
          <SiteHeader>
            <HeaderTop>
              <Social>
                <SocialItem $w={17} $gap={17}>
                  <svg width="17" height="32" viewBox="0 0 17 32"><path d="M16.500 1v5h-3c-2.300 0-2.800 1.100-2.800 2.700V12h5.500l-.7 5.600h-4.800V31H5.200V17.600H.4V12h4.800V7.900C5.200 3.200 8.100.6 12.300.6c2 0 3.600.2 4.200.4z" fill="#fff" /></svg>
                </SocialItem>
                <SocialItem $w={30} $gap={15} $top={2}><FaTwitter size={29} /></SocialItem>
                <SocialItem $w={29} $gap={15} $top={2}>
                  <svg width="29" height="29" viewBox="0 0 29 29">
                    <path fillRule="evenodd" d="M3.500.5h22a3 3 0 0 1 3 3v22a3 3 0 0 1-3 3h-22a3 3 0 0 1-3-3v-22a3 3 0 0 1 3-3zM20.500 4v4.200q0 1 1 1h3.200q1 0 1-1V4q0-1-1-1h-3.200q-1 0-1 1zM3.800 12.200v12q0 1.200 1.200 1.200h19q1.200 0 1.200-1.200v-12h-2.600a9 9 0 1 1-16.200 0zM14.500 8.700a5.800 5.800 0 1 0 0 11.600 5.800 5.800 0 0 0 0-11.600z" fill="#fff" />
                  </svg>
                </SocialItem>
                <SocialItem $w={29} $gap={0} $top={2}><FaPinterest size={28} /></SocialItem>
              </Social>
              <Logo><Fit w={372}>Philosophy.</Fit></Logo>
              <Search>
                <Fit w={87}>SEARCH</Fit>
                <SearchIcon width="29" height="30" viewBox="0 0 29 30">
                  <circle cx="11.500" cy="12.500" r="10" fill="none" stroke="#fff" strokeWidth="2.200" />
                  <path d="M18.500 19.500l9 8.500" stroke="#fff" strokeWidth="2.600" strokeLinecap="round" />
                </SearchIcon>
              </Search>
            </HeaderTop>
            <Nav>
              <NavItem $gap={62.5}><Fit w={60}>Home</Fit></NavItem>
              <NavItem $gap={57.5}><Fit w={109.5}>Categories</Fit><CaretIcon /></NavItem>
              <NavItem $gap={56.5}><Fit w={46}>Blog</Fit><CaretIcon /></NavItem>
              <NavItem $gap={62}><Fit w={61.5}>Styles</Fit></NavItem>
              <NavItem $gap={61.5}><Fit w={63}>About</Fit></NavItem>
              <NavItem $active $gap={0}><Fit w={79.5}>Contact</Fit></NavItem>
            </Nav>
          </SiteHeader>
          <Title><Fit w={799}>Feel Free To Contact Us.</Fit></Title>
          <MapFrame>
            <CityMap />
            <ZoomControls>
              <ZoomButton $h={45}><svg width="18" height="18" viewBox="0 0 18 18"><path d="M8.500 1v16M.5 9h16" stroke="#fff" strokeWidth="4.600" /></svg></ZoomButton>
              <ZoomButton $h={44}><svg width="18" height="18" viewBox="0 0 18 18"><path d="M.5 9h16" stroke="#fff" strokeWidth="4.600" /></svg></ZoomButton>
            </ZoomControls>
            <Fullscreen>
              <svg width="26" height="26" viewBox="0 0 26 26" display="block"><path d="M1.500 8V1.500H8M18 1.500h6.500V8M24.500 18v6.500H18M8 24.500H1.500V18" fill="none" stroke="#666" strokeWidth="3" /></svg>
            </Fullscreen>
            <Dialog>
              <Brand><Fit w={69}>Google</Fit></Brand>
              <Message><Fit w={380}>This page can't load Google Maps correctly.</Fit></Message>
              <Actions>
                <Question><Fit w={206}>Do you own this website?</Fit></Question>
                <OkButton>OK</OkButton>
              </Actions>
              <Lines><Line /><Line /></Lines>
            </Dialog>
          </MapFrame>
        </Page>
        <Scrollbar>
          <ScrollArrow width="25" height="29" viewBox="0 0 25 29"><path d="M5.500 19.500L12.500 12l7 7.500z" fill="#a3a3a3" /></ScrollArrow>
          <ScrollThumb />
          <ScrollArrow width="25" height="29" viewBox="0 0 25 29"><path d="M6 11l6.500 7 6.500-7z" fill="#505050" /></ScrollArrow>
        </Scrollbar>
      </Viewport>

      <Taskbar>
        <StartButton>
          <svg width="24" height="24" viewBox="0 0 24 24"><path d="M0 3.500l10-1.500v9.500H0zM11 1.800L24 0v11.500H11zM0 12.500h10V22L0 20.500zM11 12.500h13V24l-13-1.800z" fill="#fff" /></svg>
        </StartButton>
        <TaskItem $w={71} $gap={12}>
          <svg width="38" height="32" viewBox="0 0 38 32">
            <path d="M1 2q0-2 2-2h12q2 0 3 3.500L20 6H1z" fill="#fbca2c" />
            <path d="M0 6h17l2-2.500h17q2 0 2 2V29q0 1.500-1.500 1.500h-35Q0 30.500 0 29z" fill="#fee48f" />
            <path d="M3 2.700h8v2H3z" fill="#fff" /><path d="M7 32V20q0-3.500 3.500-3.500h17q3.500 0 3.500 3.500v12h-6v-9H13v9z" fill="#39b5ea" />
          </svg>
        </TaskItem>
        <TaskItem $w={71} $gap={16} $nudge={2}>
          <svg width="32" height="32" viewBox="0 0 32 32">
            {gear()}
            <circle cx="16" cy="16" r="9.800" fill="none" stroke="#fff" strokeWidth="4" />
          </svg>
        </TaskItem>
        <TaskItem $w={85} $gap={9} $nudge={2} $active>
          <svg width="40" height="40" viewBox="0 0 40 40">
            <circle cx="20" cy="20" r="19.500" fill="#ffcd42" />
            <path d="M20 20L3.300 10.200A19.500 19.500 0 0 0 19.300 39.500L28 24z" fill="#119e5a" />
            <path d="M20 11h17.300A19.500 19.500 0 0 0 3.300 10.200L11.500 24z" fill="#db4437" />
            <circle cx="20" cy="20" r="9" fill="#f1f1f1" /><circle cx="20" cy="20" r="7.200" fill="#4c8bf5" />
          </svg>
        </TaskItem>
        <Tray>
          <TrayIcons width="160" height="70" viewBox="1550 1010 160 70" fill="none" stroke="#fff">
            <path d="M1555.500 1049l8.500-9 8.500 9" strokeWidth="1.500" />
            <path d="M1603 1039h14.500v14H1599v-4M1618.500 1043v6" strokeWidth="2" />
            <path d="M1602 1041h6v10h-6z" fill="#fff" stroke="none" />
            <path d="M1592 1038.500h9v5q-1 3-3.500 3.500v7h-2.500v-7q-2.500-.5-3-3.500z" fill="#fff" stroke="none" />
            <path d="M1594.500 1034v5M1598.500 1034v5" strokeWidth="1.600" />
            <path d="M1639.500 1057q0-20 20-20M1645.500 1057q0-14 14-14M1651 1057q0-8.500 8.500-8.500" strokeWidth="1.600" />
            <circle cx="1658.500" cy="1055.500" r="2" fill="#fff" stroke="none" />
            <path d="M1677.500 1041h4l6-5.500v19l-6-5.500h-4z" strokeWidth="1.500" />
            <path d="M1690.500 1041q3 4 0 8" strokeWidth="1.500" />
            <path d="M1694.500 1038q5.500 7 0 14M1698.500 1035q7.500 10 0 20" stroke="#8a7676" strokeWidth="1.500" />
          </TrayIcons>
          <Clock><Fit w={87}>10:44 AM</Fit><Fit w={98}>21-Nov-18</Fit></Clock>
          <Notice>
            <svg width="30" height="30" viewBox="0 0 30 30">
              <path d="M0 1h28v22H16l-5 5-3-5H0z" fill="#fff" />
              <path d="M6 7.500h16M6 12h16M6 16.500h10" stroke="#260808" strokeWidth="1.300" />
            </svg>
            <Badge>2</Badge>
          </Notice>
          <Peek />
        </Tray>
      </Taskbar>
    </Screen>
  );
}
